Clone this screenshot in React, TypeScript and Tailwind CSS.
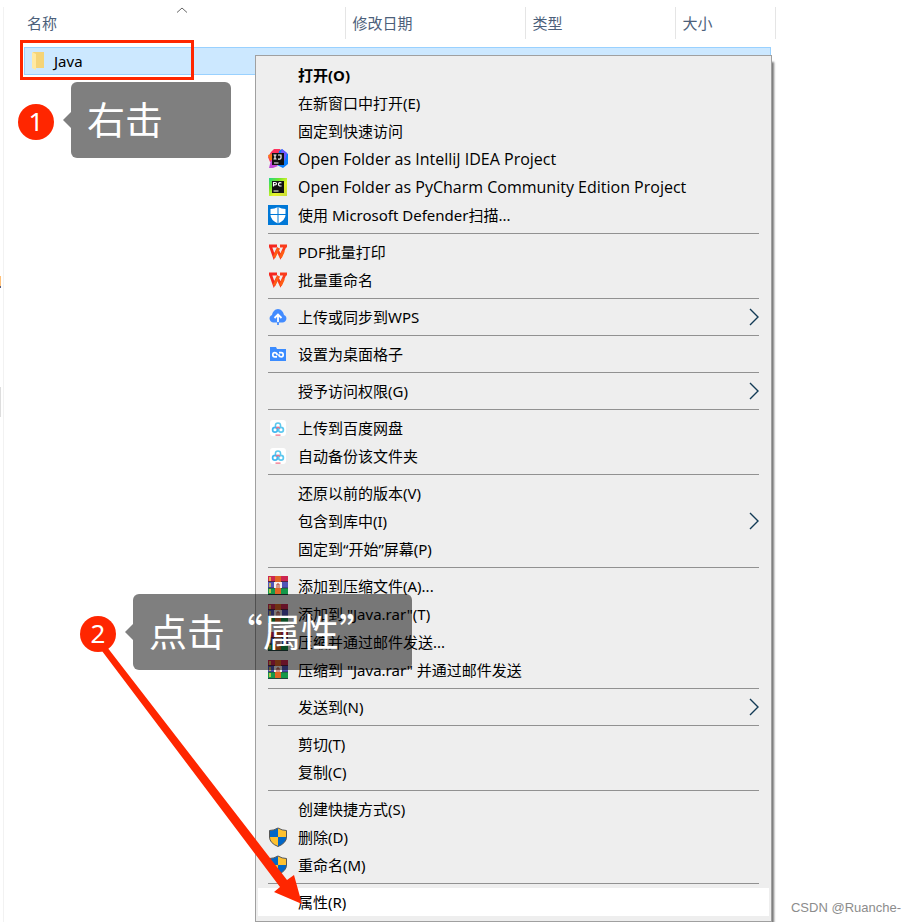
import type { ReactNode } from 'react';

type Item = { label: string; icon?: ReactNode; bold?: boolean; submenu?: boolean; active?: boolean; latin?: boolean };

function IdeaIcon() {
  return (
    <svg viewBox="0 0 20 20" className="size-5">
      <path d="M3 3 6 0h6l2 3-2 8-10 2-2-5z" fill="#fe315d" />
      <path d="M11 2 14 0l6 5v10l-5 4-6-3z" fill="#087cfa" />
      <path d="M14 0l5 4-2 8-5-6z" fill="#6b57ff" />
      <path d="M0 6l4-1v6H2z" fill="#f97a12" />
      <path d="M1 19l2-8 7 6-5 2z" fill="#c04ad8" />
      <rect x="4" y="4" width="12" height="12" fill="#111" />
      <path d="M5.500 6h3M7 6v4M5.500 10h3M10 6h3v3q0 1.200-1.500 1.200H10M6 14h4.500" fill="none" stroke="#fff" strokeWidth="1.200" />
    </svg>
  );
}

function PyCharmIcon() {
  return (
    <svg viewBox="0 0 20 20" className="size-5">
      <defs>
        <linearGradient id="pycharm" x1="0" y1="0" x2="1" y2="1">
          <stop offset="0" stopColor="#21d789" />
          <stop offset="0.300" stopColor="#6fe52c" />
          <stop offset="0.600" stopColor="#e8f32d" />
          <stop offset="1" stopColor="#c6dc38" />
        </linearGradient>
      </defs>
      <rect x="1" y="1" width="18" height="18" fill="url(#pycharm)" />
      <rect x="4" y="4" width="12" height="12" fill="#111" />
      <path d="M5.500 9.500V5.500H7q1.500 0 1.500 1.200T7 7.900H6M13.500 6q-3-1-3 1.300t3 1.500M5.500 14h5" fill="none" stroke="#fff" strokeWidth="1.200" />
    </svg>
  );
}

function DefenderIcon() {
  return (
    <svg viewBox="0 0 20 20" className="size-5">
      <rect width="20" height="20" fill="#0078d7" />
      <path d="M10 2q3.500 2 7.500 2v6q0 5-7.500 8.500Q2.500 15 2.500 10V4Q6.500 4 10 2z" fill="#fff" />
      <path d="M10 2v17M2 9.500h16" stroke="#0078d7" />
    </svg>
  );
}

function WpsIcon() {
  return (
    <svg viewBox="0 0 20 20" className="size-5">
      <path d="M1 4h8M2.500 4.500 6 14.500 10.500 6" fill="none" stroke="#f5271f" strokeWidth="2.800" />
      <path d="M9 7l3.500 7.500L17 4.500M12 4h7" fill="none" stroke="#fa3c1c" strokeWidth="2.800" />
      <path d="M6 15.500 10.500 6M12.500 15.500 15.500 9" fill="none" stroke="#ff5d14" strokeWidth="2.800" />
    </svg>
  );
}

function CloudIcon() {
  return (
    <svg viewBox="0 0 20 20" className="size-5">
      <path d="M5.500 15.500A3.900 3.900 0 0 1 4 8C4.500 5 7 2 10 2s5.500 3 6 6a3.900 3.900 0 0 1-1.500 7.500z" fill="#438cff" />
      <path d="M10 16V8M6.500 11 10 7.500l3.500 3.500" fill="none" stroke="#fff" strokeWidth="1.800" />
      <path d="M10 15v3" stroke="#438cff" strokeWidth="1.800" />
    </svg>
  );
}

function GridFolderIcon() {
  return (
    <svg viewBox="0 0 20 20" className="size-5">
      <path d="M2 3h6l1 2h9v12H2z" fill="#3b8cff" />
      <path d="M9 12.800H6.800q-2 0-2-2.100t2-2.100q1.600 0 2.200 1.200v1.400M11 8.600h2.200q2 0 2 2.100t-2 2.100q-1.600 0-2.200-1.200v-1.400" fill="none" stroke="#fff" strokeWidth="1.700" />
    </svg>
  );
}

function BaiduIcon() {
  return (
    <svg viewBox="0 0 20 20" className="size-5">
      <rect x="2" y="2" width="16" height="16" rx="3" fill="#fff" />
      <circle cx="10" cy="7.500" r="2.600" fill="none" stroke="#5cc8ee" strokeWidth="1.500" />
      <circle cx="7" cy="11.800" r="2.400" fill="none" stroke="#3fb8f0" strokeWidth="1.700" />
      <circle cx="13" cy="11.800" r="2.400" fill="none" stroke="#5cc8f0" strokeWidth="1.700" />
      <path d="M8 10.500 10 9l2 1.500M7.500 17.200h5" fill="none" stroke="#ee7088" strokeWidth="1.300" />
    </svg>
  );
}

function RarIcon() {
  return (
    <svg viewBox="0 0 20 20" className="size-5">
      <rect width="20" height="6" fill="#cc2650" />
      <rect y="6" width="20" height="6" fill="#5054b8" />
      <rect y="12" width="20" height="7" fill="#15984a" />
      <path d="M0 5.500h20M0 12h20M0 18.500h20" stroke="#252038" opacity="0.700" />
      <path d="M2 1v4M2 7v4M2 13v4" stroke="#e9cf48" strokeWidth="1.500" />
      <rect x="7" width="6" height="18" fill="#df6424" />
      <rect x="6" y="6" width="8" height="6" fill="#f5eeee" />
      <path d="M9 12V8h2v4" fill="none" stroke="#b03a28" />
    </svg>
  );
}

function ShieldIcon() {
  return (
    <svg viewBox="0 0 20 20" className="size-5">
      <clipPath id="uac">
        <path d="M10 1q4 2.500 8.500 2.500V10q0 6-8.500 9.500Q1.500 16 1.500 10V3.500Q6 3.500 10 1z" />
      </clipPath>
      <g clipPath="url(#uac)">
        <path d="M0 0h10v10H0z" fill="#0067c8" />
        <path d="M10 0h10v10H10zM0 10h10v10H0z" fill="#fdc130" />
        <path d="M10 10h10v10H10z" fill="#0067c8" />
      </g>
      <path d="M10 1q4 2.500 8.500 2.500V10q0 6-8.500 9.500Q1.500 16 1.500 10V3.500Q6 3.500 10 1z" fill="none" stroke="#555" />
    </svg>
  );
}

const groups: Item[][] = [
  [
    { label: '打开(O)', bold: true },
    { label: '在新窗口中打开(E)' },
    { label: '固定到快速访问' },
    { label: 'Open Folder as IntelliJ IDEA Project', icon: <IdeaIcon />, latin: true },
    { label: 'Open Folder as PyCharm Community Edition Project', icon: <PyCharmIcon />, latin: true },
    { label: '使用 Microsoft Defender扫描...', icon: <DefenderIcon /> },
  ],
  [
    { label: 'PDF批量打印', icon: <WpsIcon /> },
    { label: '批量重命名', icon: <WpsIcon /> },
  ],
  [{ label: '上传或同步到WPS', icon: <CloudIcon />, submenu: true }],
  [{ label: '设置为桌面格子', icon: <GridFolderIcon /> }],
  [{ label: '授予访问权限(G)', submenu: true }],
  [
    { label: '上传到百度网盘', icon: <BaiduIcon /> },
    { label: '自动备份该文件夹', icon: <BaiduIcon /> },
  ],
  [
    { label: '还原以前的版本(V)' },
    { label: '包含到库中(I)', submenu: true },
    { label: '固定到“开始”屏幕(P)' },
  ],
  [
    { label: '添加到压缩文件(A)...', icon: <RarIcon /> },
    { label: '添加到 "Java.rar"(T)', icon: <RarIcon /> },
    { label: '压缩并通过邮件发送...', icon: <RarIcon /> },
    { label: '压缩到 "Java.rar" 并通过邮件发送', icon: <RarIcon /> },
  ],
  [{ label: '发送到(N)', submenu: true }],
  [{ label: '剪切(T)' }, { label: '复制(C)' }],
  [
    { label: '创建快捷方式(S)' },
    { label: '删除(D)', icon: <ShieldIcon /> },
    { label: '重命名(M)', icon: <ShieldIcon /> },
  ],
  [{ label: '属性(R)', active: true }],
];

function MenuItem({ item }: { item: Item }) {
  return (
    <button
      type="button"
      role="menuitem"
      className={`flex h-7 w-full items-center gap-2.5 px-2.5 text-left whitespace-nowrap text-black ${item.active ? 'bg-white' : ''} ${item.bold ? 'font-bold' : ''}`}
    >
      <span className="size-5 shrink-0">{item.icon}</span>
      <span className={`flex-1 ${item.latin ? "font-['Open_Sans',sans-serif] text-base leading-5" : ''}`}>{item.label}</span>
      {item.submenu && (
        <svg viewBox="0 0 10 18" className="h-[18px] w-2.5" fill="none" stroke="#123a55" strokeWidth="1.400">
          <path d="M1 1l8 8-8 8" />
        </svg>
      )}
    </button>
  );
}

function ContextMenu() {
  return (
    <div
      role="menu"
      className="absolute top-[55px] left-[255px] w-[517px] border border-[#a0a0a0] bg-[#eeeeee] px-0.5 py-[5px] shadow-[3px_6px_2px_-1px_#777777]"
    >
      {groups.map((group, i) => (
        <div key={i}>
          {i > 0 && <hr className="mx-2.5 my-1 border-[#919191]" />}
          {group.map((item, j) => (
            <MenuItem key={j} item={item} />
          ))}
        </div>
      ))}
    </div>
  );
}

function Callout({ step, text, className, boxClassName }: { step: number; text: string; className: string; boxClassName: string }) {
  return (
    <div className={`absolute z-10 flex items-center ${className}`}>
      <span className="mt-1 flex size-9 items-center justify-center rounded-full bg-[#ff2600] pb-0.5 text-[26px] text-white">{step}</span>
      <svg viewBox="0 0 8 16" className="ml-[9px] h-4 w-2" fill="#000" fillOpacity="0.5">
        <path d="M8 0v16L0 8z" />
      </svg>
      <span
        className={`flex h-[76px] items-center rounded-md bg-black/50 pb-1 pl-4 font-['Noto_Sans_CJK_SC',sans-serif] text-[38px] whitespace-nowrap text-white ${boxClassName}`}
      >
        {text}
      </span>
    </div>
  );
}

export default function App() {
  return (
    <div
      lang="zh-CN"
      className="relative min-h-screen overflow-hidden bg-white font-['Noto_Sans','Noto_Sans_CJK_SC',sans-serif] text-[15px] leading-5"
    >
      <div className="absolute top-[276px] left-0 h-3 w-px border-b-2 border-[#5a5f80] bg-[#ffc078]" />
      <div className="absolute top-[387px] left-0 h-[30px] w-px bg-[#dddddd]" />

      <main className="mt-[7px] ml-[3px] min-h-[915px] border-l border-[#f2f2f2]">
        <table className="w-[771px] table-fixed border-collapse text-left">
          <thead>
            <tr className="h-8 text-[#4c607a]">
              <th className="relative w-[341px] border-r border-[#e5e5e5] pl-[23px] font-normal">
                名称
                <svg viewBox="0 0 10 6" className="absolute top-0 left-[173px] h-1.5 w-2.5" fill="none" stroke="#666">
                  <path d="M0 5.500l5-4.500 5 4.500" />
                </svg>
              </th>
              <th className="w-[180px] border-r border-[#e5e5e5] pl-[7px] font-normal">修改日期</th>
              <th className="w-[150px] border-r border-[#e5e5e5] pl-[7px] font-normal">类型</th>
              <th className="w-[100px] border-r border-[#e5e5e5] pl-[7px] font-normal">大小</th>
            </tr>
          </thead>
        </table>
        <div className="mt-2 ml-5 flex h-7 w-[747px] items-center gap-2.5 border border-[#99d1ff] bg-[#cce8ff] pl-[7px] text-black">
          <svg viewBox="0 0 12 18" className="h-[18px] w-3">
            <path d="M1 0h11v16H3z" fill="#f5d477" />
            <path d="M0 0l4 2v16l-4-2z" fill="#ffe9a2" />
          </svg>
          Java
        </div>
      </main>

      <ContextMenu />

      <div className="absolute top-10 left-5 h-10 w-[174px] border-3 border-[#ff2600]" />
      <Callout step={1} text="右击" className="top-[82px] left-[18px]" boxClassName="w-[160px]" />
      <Callout step={2} text="点击“属性”" className="top-[594px] left-[80px]" boxClassName="w-[279px]" />

      <svg viewBox="0 0 210 262" className="absolute top-[644px] left-[95px] z-10 h-[262px] w-[210px]" fill="#ff2600">
        <path d="M7 7l5-4 180 233 7-5 8 29-28-12 6-5z" />
      </svg>

      <span className="absolute right-[15px] bottom-1 font-['Liberation_Sans',sans-serif] text-[13px] text-[#8c8c8c]">CSDN @Ruanche-</span>
    </div>
  );
}
